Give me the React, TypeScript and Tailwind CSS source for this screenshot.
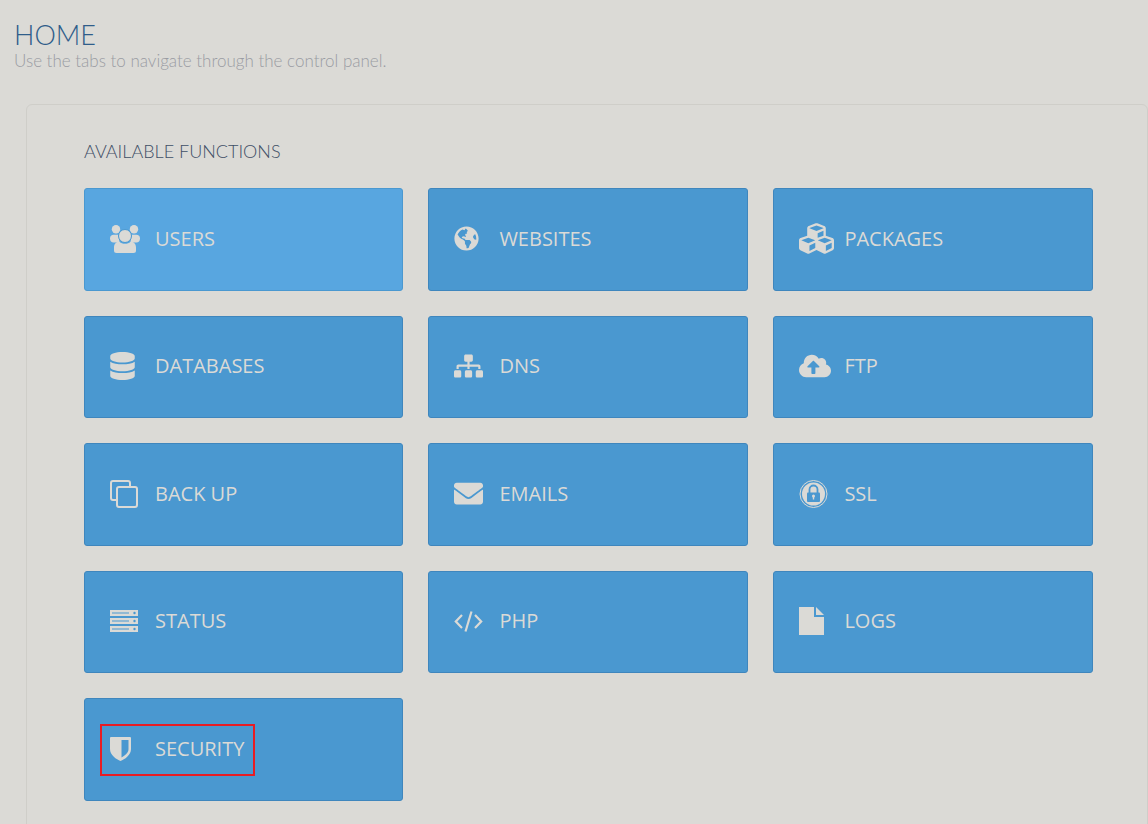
import type { ReactNode } from "react";
import { FaGlobeAmericas, FaCubes, FaDatabase, FaSitemap, FaCloudUploadAlt, FaEnvelope } from "react-icons/fa";

const BLUE = "#4a98d0";

const Users = () => (
  <svg viewBox="0 0 30 28" className="w-[30px] h-[28px]" fill="currentColor">
    <circle cx="6" cy="4.200" r="4.200" />
    <circle cx="24" cy="4.200" r="4.200" />
    <path d="M0 13.500c0-2.500 1.500-3.700 3.500-3.700h5l1 7.700H3.500C1.500 17.500 0 16 0 13.500z" />
    <path d="M30 13.500c0-2.500-1.500-3.700-3.500-3.700h-5l-1 7.700h6c2 0 3.500-1.500 3.500-4z" />
    <circle cx="15" cy="11" r="6.500" stroke={BLUE} strokeWidth="1" />
    <path d="M6.500 28a2.500 2.500 0 0 1-2.500-2.500v-3c0-3.800 2.300-5.800 5.500-5.800 1.400 1.400 3.200 2 5.500 2s4.100-.6 5.500-2c3.200 0 5.500 2 5.500 5.800v3a2.500 2.500 0 0 1-2.500 2.500z" />
  </svg>
);

const Clone = () => (
  <svg viewBox="0 0 28 28" className="w-[28px] h-[28px]" fill="none" stroke="currentColor" strokeWidth="2">
    <path d="M6 20H3a2 2 0 0 1-2-2V3a2 2 0 0 1 2-2h15a2 2 0 0 1 2 2v3" />
    <rect x="7" y="7" width="20" height="20" rx="2" />
  </svg>
);

const Server = () => (
  <svg viewBox="0 0 28 22" className="w-[28px] h-[22px]" fill="currentColor">
    {[0, 8, 16].map((y) => (
      <g key={y}>
        <rect x="0" y={y} width="28" height="6" />
        <rect x="2" y={y + 2.500} width="17" height="1" fill={BLUE} />
        <circle cx="24.500" cy={y + 3} r="1.200" fill={BLUE} />
      </g>
    ))}
  </svg>
);

const Code = () => (
  <svg viewBox="0 0 29 21" className="w-[29px] h-[21px]" fill="none" stroke="currentColor" strokeWidth="2.200">
    <path d="M8 4 1.800 10.500 8 17" />
    <path d="M21 4l6.200 6.500L21 17" />
    <path d="M17.500 .5 11.500 20.500" />
  </svg>
);

const Shield = () => (
  <svg viewBox="0 0 21 24" className="w-[21px] h-[24px]" fill="currentColor">
    <path fillRule="evenodd" d="M1 0h19a1 1 0 0 1 1 1v11c0 3-1.500 5.500-3.800 7.800-2 2-4.700 3.500-6.700 4.200-2-.7-4.700-2.200-6.700-4.200C1.500 17.500 0 15 0 12V1a1 1 0 0 1 1-1zm10.500 3v17.500c1.500-.8 3.200-1.900 4.500-3.200 1.700-1.700 2.500-3.400 2.500-5.300V3z" />
  </svg>
);

const Ssl = () => (
  <svg viewBox="0 0 29 28" className="w-[29px] h-[28px]" fill="none">
    <circle cx="14.500" cy="14" r="13.500" stroke="currentColor" strokeWidth="1" />
    <circle cx="14.500" cy="14" r="11.500" fill="currentColor" />
    <path d="M10.500 13V9.500a4 4 0 0 1 8 0V13" stroke={BLUE} strokeWidth="1.800" />
    <rect x="8" y="12.500" width="13" height="9.500" rx="1" fill={BLUE} />
    <circle cx="14.500" cy="16" r="1.500" fill="currentColor" />
    <rect x="13.800" y="16" width="1.400" height="3.500" fill="currentColor" />
  </svg>
);

const FileIcon = () => (
  <svg viewBox="0 0 25 28" className="w-[25px] h-[28px]" fill="currentColor">
    <path d="M0 0h15v10h10v18H0z" />
    <path d="M17 0l8 8h-8z" />
  </svg>
);

type Item = { label: string; icon: ReactNode; light?: boolean; marked?: boolean };

const items: Item[] = [
  { label: "USERS", icon: <Users />, light: true },
  { label: "WEBSITES", icon: <FaGlobeAmericas className="w-[25px] h-[25px]" /> },
  { label: "PACKAGES", icon: <FaCubes className="w-[35px] h-[35px]" /> },
  { label: "DATABASES", icon: <FaDatabase className="w-[25px] h-[28px]" /> },
  { label: "DNS", icon: <FaSitemap className="w-[29px] h-[24px]" /> },
  { label: "FTP", icon: <FaCloudUploadAlt className="w-[32px] h-[26px]" /> },
  { label: "BACK UP", icon: <Clone /> },
  { label: "EMAILS", icon: <FaEnvelope className="w-[29px] h-[29px]" /> },
  { label: "SSL", icon: <Ssl /> },
  { label: "STATUS", icon: <Server /> },
  { label: "PHP", icon: <Code /> },
  { label: "LOGS", icon: <FileIcon /> },
  { label: "SECURITY", icon: <Shield />, marked: true },
];

export default function App() {
  return (
    <div className="h-[824px] w-[1148px] overflow-hidden bg-[#dbdad6] font-['Lato',sans-serif]">
      <div className="pl-[14px] pt-[19px]">
        <h1 className="text-[27px] leading-[32px] font-light text-[#2f5d8a]">HOME</h1>
        <p className="text-[17px] leading-[20px] font-light text-[#9a9ca3]">Use the tabs to navigate through the control panel.</p>
      </div>
      <div className="ml-[26px] mt-[33px] h-[800px] rounded-[6px] border border-[#cfcec9] pl-[57px] pr-[53px] pt-[34px]">
        <h2 className="text-[18px] leading-[24px] font-light text-[#3f4f66]">AVAILABLE FUNCTIONS</h2>
        <div className="mt-[25px] grid grid-cols-[319.4px_320px_320px] gap-[25px] font-['Open_Sans',sans-serif]">
          {items.map((it) => (
            <div
              key={it.label}
              className={`relative flex h-[102.5px] items-center rounded-[3px] border pb-[1.5px] pl-[25px] text-[20px] text-[#dbdad6] ${
                it.light ? "border-[#4a98d0] bg-[#58a6e0]" : "border-[#3f86bd] bg-[#4a98d0]"
              }`}
            >
              <div className="flex w-[45px] shrink-0 items-center">{it.icon}</div>
              <span>{it.label}</span>
              {it.marked && <div className="absolute left-[15px] top-[25px] h-[52px] w-[155px] border-2 border-[#e81c24]" />}
            </div>
          ))}
        </div>
      </div>
    </div>
  );
}
